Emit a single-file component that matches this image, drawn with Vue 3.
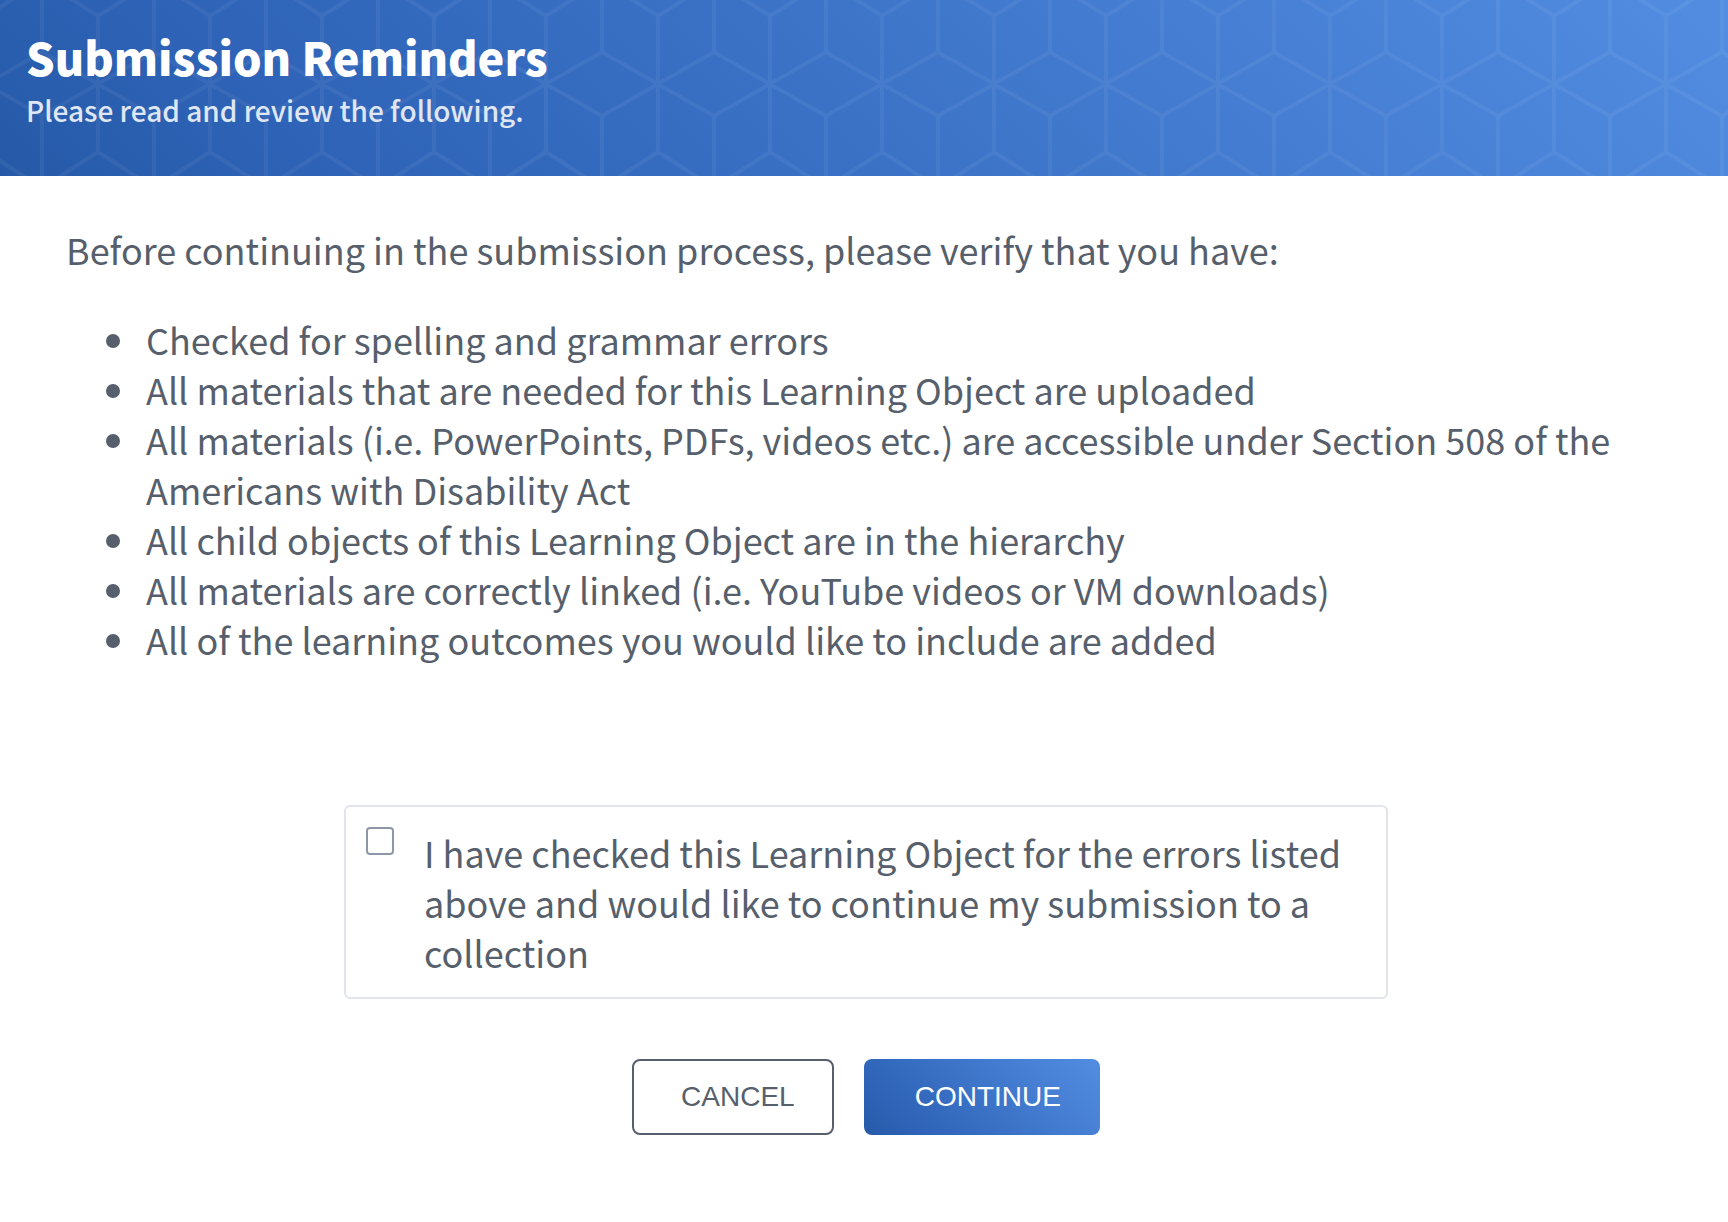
<script setup>
import { ref } from 'vue'

const reminders = [
  'Checked for spelling and grammar errors',
  'All materials that are needed for this Learning Object are uploaded',
  'All materials (i.e. PowerPoints, PDFs, videos etc.) are accessible under Section 508 of the Americans with Disability Act',
  'All child objects of this Learning Object are in the hierarchy',
  'All materials are correctly linked (i.e. YouTube videos or VM downloads)',
  'All of the learning outcomes you would like to include are added',
]
const confirmed = ref(false)
</script>

<template>
  <main class="dialog">
    <header class="banner">
      <svg class="banner-pattern" width="100%" height="100%" aria-hidden="true">
        <defs>
          <pattern id="hexagons" x="14" y="0" width="112" height="176" patternUnits="userSpaceOnUse">
            <path
              d="M28 -20V52M28 116V190M84 16V152M-28 84L28 52L140 116M-28 84L28 116L140 52M-28 16L28 -20L84 16L140 -20M-28 152L28 188L84 152L140 188"
              fill="none"
              stroke="#fff"
              stroke-width="4"
            />
          </pattern>
        </defs>
        <rect width="100%" height="100%" fill="url(#hexagons)" />
      </svg>
      <div class="banner-text">
        <h1>Submission Reminders</h1>
        <p>Please read and review the following.</p>
      </div>
    </header>

    <section class="content">
      <p class="intro">Before continuing in the submission process, please verify that you have:</p>
      <ul class="reminders">
        <li v-for="item in reminders" :key="item">{{ item }}</li>
      </ul>

      <label class="confirm" for="confirm">
        <input id="confirm" v-model="confirmed" type="checkbox" />
        <span>I have checked this Learning Object for the errors listed above and would like to continue my submission to a collection</span>
      </label>

      <div class="actions">
        <button type="button" class="button cancel">CANCEL</button>
        <button type="button" class="button continue">CONTINUE</button>
      </div>
    </section>
  </main>
</template>

<style>
body {
  background: #fff;
}
</style>

<style scoped>
.dialog {
  font-family: "Noto Sans CJK SC", "Noto Sans", sans-serif;
  font-size: 36px;
  line-height: 50px;
  color: #565f6b;
}
.banner {
  position: relative;
  padding: 28px 26px 42px;
  background: linear-gradient(45deg, #265aa8, #2e63b7 18%, #528de2);
  color: #fff;
}
.banner-pattern {
  position: absolute;
  inset: 0;
  opacity: 0.05;
}
.banner-text {
  position: relative;
}
h1 {
  margin: 0;
  font-size: 45px;
  line-height: 58px;
  font-weight: 900;
}
.banner-text p {
  margin: 0;
  font-size: 28px;
  font-weight: 500;
  line-height: 48px;
  color: #e0e7f4;
}
.content {
  padding: 48px 62px 88px 66px;
}
.intro {
  margin: 0 0 40px;
}
.reminders {
  margin: 0;
  padding: 0 0 0 80px;
  list-style: none;
}
.reminders li {
  position: relative;
}
.reminders li::before {
  content: "";
  position: absolute;
  left: -40px;
  top: 20px;
  width: 14px;
  height: 14px;
  border-radius: 50%;
  background: #565f6b;
}
.confirm {
  display: flex;
  align-items: flex-start;
  gap: 30px;
  box-sizing: border-box;
  max-width: 1044px;
  margin: 141px auto 60px;
  padding: 20px;
  border: 2px solid #e1e5eb;
  border-radius: 6px;
}
.confirm input {
  appearance: none;
  flex: none;
  width: 28px;
  height: 28px;
  margin: 0;
  border: 2px solid #8d97a6;
  border-radius: 4px;
}
.confirm input:checked {
  background: #3b73c6;
}
.actions {
  display: flex;
  justify-content: center;
  gap: 30px;
}
.button {
  height: 76px;
  padding: 0 37px 0 47px;
  border: 2px solid #565f6b;
  border-radius: 8px;
  background: #fff;
  color: #565f6b;
  font-family: "Liberation Sans", Arial, sans-serif;
  font-size: 28px;
  line-height: 32px;
}
.button.continue {
  padding: 0 39px 0 51px;
  border: 0;
  background: linear-gradient(45deg, #265aa8, #2e63b7 18%, #528de2);
  color: #fff;
}
</style>
